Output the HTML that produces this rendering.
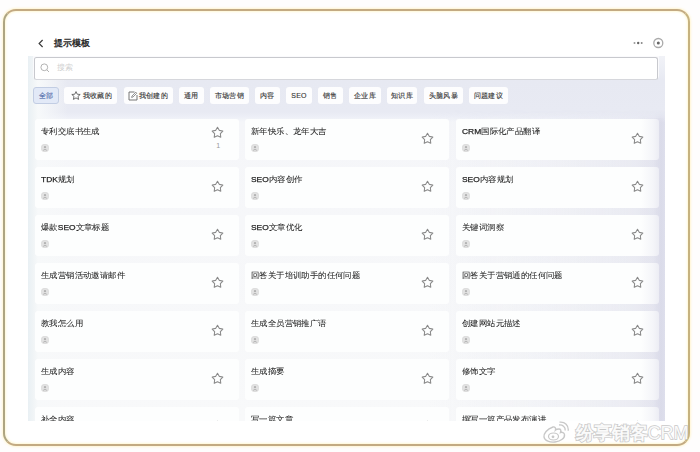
<!DOCTYPE html>
<html><head><meta charset="utf-8">
<style>
*{margin:0;padding:0;box-sizing:border-box}
html,body{width:700px;height:452px;overflow:hidden;background:#fefdfd;font-family:"Liberation Sans",sans-serif;color:#333}
.abs{position:absolute}
#frame{position:absolute;left:2.7px;top:8.7px;width:687.5px;height:437.4px;border:2px solid #c3aa82;border-left-color:#aea582;border-right-color:#c6b27f;border-radius:13px;background:#fff;box-shadow:0 0 2px 1px rgba(255,244,200,0.8),inset 0 0 2px 1px rgba(255,246,205,0.8)}
#title{left:54px;top:38px;font-size:9px;font-weight:normal;color:#222;line-height:11px;white-space:nowrap;-webkit-text-stroke:0.35px #222}
#panel{left:28px;top:56px;width:637px;height:365px;background:linear-gradient(90deg,#e9f0f4 0,#f0f4f6 5px,#f7f9fa 10px,rgba(247,249,250,0) 40px),linear-gradient(180deg,#f1f2f7 0,#eceef5 12px,#e7e9f2 24px,#e8eaf3 56px,#eceef6 60px,#f5f6f9 66px,#f8f9fa 100%);overflow:hidden}
#rstrip{position:absolute;left:0;top:54px;width:637px;height:311px;-webkit-mask-image:linear-gradient(180deg,transparent 0,#000 12px);background:linear-gradient(90deg,rgba(218,219,233,0) 0,rgba(218,219,233,0) 400px,rgba(218,219,233,0.22) 532px,rgba(218,219,233,0.4) 600px,rgba(218,219,233,0.6) 625px,rgba(218,219,233,1) 633px,rgba(222,223,236,1) 637px)}
#rov{position:absolute;left:605px;top:62px;width:32px;height:303px;background:linear-gradient(90deg,rgba(222,222,236,0) 0,rgba(222,222,236,0) 8px,rgba(225,225,238,0.3) 20px,rgba(220,220,234,0.5) 26px,rgba(220,220,234,0) 32px)}
#search{left:6px;top:1px;width:624px;height:22.5px;background:#fff;border:1px solid #c8c9ce;border-bottom-color:#d6d7dc;border-radius:2.5px;box-shadow:0 -2px 0 1px #fafafc}
#search .ph{position:absolute;left:22px;top:5px;font-size:8px;color:#d0d0d0;line-height:10px}
.chip{position:absolute;top:31.3px;height:16.5px;background:#fdfdfe;border-radius:3px;font-size:7px;letter-spacing:0.2px;line-height:17px;color:#333;white-space:nowrap;text-align:center;-webkit-text-stroke:0.12px #333}
.chip .ct{position:absolute;top:0}
.chip.on{background:#e2e9f7;border:1px solid #c2cde3;color:#4d68a8;line-height:15.5px;-webkit-text-stroke:0.12px #4d68a8}
.card{position:absolute;height:41px;background:#fdfefe;border-radius:3px}
.card .t{position:absolute;left:6px;top:6.6px;font-size:8px;line-height:11px;transform-origin:0 50%;transform:scaleX(1.05);color:#1f1f1f;white-space:nowrap;-webkit-text-stroke:0.05px #1f1f1f}
.l{letter-spacing:0;-webkit-text-stroke:0.25px #1f1f1f}
.card .av{position:absolute;left:6px;top:24.5px;width:8px;height:8px}.card .av svg{display:block}
.card svg.st{position:absolute}
.card .cnt{position:absolute;top:23px;font-size:7px;color:#999;line-height:8px}
#wm{left:575.5px;top:421px;font-size:18px;font-weight:bold;line-height:24px;color:#fafafa;white-space:nowrap;-webkit-text-stroke:1.5px #c8c8c8;paint-order:stroke fill;letter-spacing:0}
</style></head><body>
<div id="frame"></div>
<svg class="abs" style="left:37px;top:39px" width="8" height="9" viewBox="0 0 8 9"><path d="M5.6 1 L2.1 4.5 L5.6 8" fill="none" stroke="#3a3a3a" stroke-width="1.15"/></svg>
<div id="title" class="abs">提示模板</div>
<svg class="abs" style="left:632px;top:40px" width="12" height="6" viewBox="0 0 12 6"><circle cx="2.5" cy="3" r="1" fill="#999"/><circle cx="6.2" cy="3" r="1.2" fill="#666"/><circle cx="9.7" cy="3" r="1" fill="#888"/></svg>
<svg class="abs" style="left:652px;top:37px" width="12" height="12" viewBox="0 0 12 12"><circle cx="6.3" cy="6" r="4.5" fill="none" stroke="#aaa" stroke-width="1.3"/><circle cx="6.3" cy="6" r="1.5" fill="#666"/></svg>
<div id="panel" class="abs">
<div id="rstrip"></div>
<div id="search" class="abs"><svg class="abs" style="left:5px;top:5px" width="10" height="10" viewBox="0 0 10 10"><circle cx="4.3" cy="4.3" r="3.4" fill="none" stroke="#aaa" stroke-width="0.9"/><path d="M6.8 6.8 L9 9" stroke="#aaa" stroke-width="0.9"/></svg><div class="ph">搜索</div></div>
<div class="chip on" style="left:5px;width:26px">全部</div><div class="chip" style="left:36px;width:53px"><svg style="position:absolute;left:6.5px;top:3.5px" width="10" height="9" viewBox="0 0 10 9"><path d="M5 0.6 L6.2 3.2 L9.2 3.5 L7 5.4 L7.6 8.4 L5 6.9 L2.4 8.4 L3 5.4 L0.8 3.5 L3.8 3.2 Z" fill="none" stroke="#555" stroke-width="0.85" stroke-linejoin="round"/></svg><span class="ct" style="left:19px">我收藏的</span></div><div class="chip" style="left:96px;width:49px"><svg style="position:absolute;left:3.5px;top:3.8px" width="10" height="10" viewBox="0 0 10 10"><path d="M6.5 1 L1 1 L1 9 L9 9 L9 4" fill="none" stroke="#666" stroke-width="0.9"/><path d="M3.6 6.4 L4 5 L7.8 1.2 L8.8 2.2 L5 6 Z" fill="none" stroke="#666" stroke-width="0.7"/></svg><span class="ct" style="left:15px">我创建的</span></div><div class="chip" style="left:151px;width:25px">通用</div><div class="chip" style="left:182px;width:39px">市场营销</div><div class="chip" style="left:227px;width:25px">内容</div><div class="chip" style="left:258px;width:26px">SEO</div><div class="chip" style="left:290px;width:25px">销售</div><div class="chip" style="left:321px;width:32px">企业库</div><div class="chip" style="left:359px;width:30px">知识库</div><div class="chip" style="left:396px;width:39px">头脑风暴</div><div class="chip" style="left:441px;width:39px">问题建议</div>
<div class="card" style="left:7px;top:63px;width:203.5px"><div class="t">专利交底书生成</div><div class="av"><svg width="8" height="8" viewBox="0 0 8 8"><circle cx="4" cy="4" r="3.9" fill="#e2e2e2" stroke="#d2d2d2" stroke-width="0.4"/><circle cx="4" cy="3.2" r="1.15" fill="#b2b2b2"/><path d="M2.2 6.3 Q4 4.5 5.8 6.3" fill="none" stroke="#b2b2b2" stroke-width="1"/></svg></div><svg class="st" style="left:176.2px;top:7.4px" width="13" height="12" viewBox="0 0 13 12"><path d="M6.50 1.20 L8.26 4.37 L11.83 5.07 L9.35 7.73 L9.79 11.33 L6.50 9.80 L3.21 11.33 L3.65 7.73 L1.17 5.07 L4.74 4.37 Z" fill="none" stroke="#8a8a8a" stroke-width="1.05" stroke-linejoin="round"/></svg><div class="cnt" style="left:181.2px">1</div></div><div class="card" style="left:217px;top:63px;width:203.5px"><div class="t">新年快乐、龙年大吉</div><div class="av"><svg width="8" height="8" viewBox="0 0 8 8"><circle cx="4" cy="4" r="3.9" fill="#e2e2e2" stroke="#d2d2d2" stroke-width="0.4"/><circle cx="4" cy="3.2" r="1.15" fill="#b2b2b2"/><path d="M2.2 6.3 Q4 4.5 5.8 6.3" fill="none" stroke="#b2b2b2" stroke-width="1"/></svg></div><svg class="st" style="left:176.2px;top:13.4px" width="13" height="12" viewBox="0 0 13 12"><path d="M6.50 1.20 L8.26 4.37 L11.83 5.07 L9.35 7.73 L9.79 11.33 L6.50 9.80 L3.21 11.33 L3.65 7.73 L1.17 5.07 L4.74 4.37 Z" fill="none" stroke="#8a8a8a" stroke-width="1.05" stroke-linejoin="round"/></svg></div><div class="card" style="left:428px;top:63px;width:203px"><div class="t"><span class="l">CRM</span>国际化产品翻译</div><div class="av"><svg width="8" height="8" viewBox="0 0 8 8"><circle cx="4" cy="4" r="3.9" fill="#e2e2e2" stroke="#d2d2d2" stroke-width="0.4"/><circle cx="4" cy="3.2" r="1.15" fill="#b2b2b2"/><path d="M2.2 6.3 Q4 4.5 5.8 6.3" fill="none" stroke="#b2b2b2" stroke-width="1"/></svg></div><svg class="st" style="left:175.2px;top:13.4px" width="13" height="12" viewBox="0 0 13 12"><path d="M6.50 1.20 L8.26 4.37 L11.83 5.07 L9.35 7.73 L9.79 11.33 L6.50 9.80 L3.21 11.33 L3.65 7.73 L1.17 5.07 L4.74 4.37 Z" fill="none" stroke="#8a8a8a" stroke-width="1.05" stroke-linejoin="round"/></svg></div><div class="card" style="left:7px;top:111px;width:203.5px"><div class="t"><span class="l">TDK</span>规划</div><div class="av"><svg width="8" height="8" viewBox="0 0 8 8"><circle cx="4" cy="4" r="3.9" fill="#e2e2e2" stroke="#d2d2d2" stroke-width="0.4"/><circle cx="4" cy="3.2" r="1.15" fill="#b2b2b2"/><path d="M2.2 6.3 Q4 4.5 5.8 6.3" fill="none" stroke="#b2b2b2" stroke-width="1"/></svg></div><svg class="st" style="left:176.2px;top:13.4px" width="13" height="12" viewBox="0 0 13 12"><path d="M6.50 1.20 L8.26 4.37 L11.83 5.07 L9.35 7.73 L9.79 11.33 L6.50 9.80 L3.21 11.33 L3.65 7.73 L1.17 5.07 L4.74 4.37 Z" fill="none" stroke="#8a8a8a" stroke-width="1.05" stroke-linejoin="round"/></svg></div><div class="card" style="left:217px;top:111px;width:203.5px"><div class="t"><span class="l">SEO</span>内容创作</div><div class="av"><svg width="8" height="8" viewBox="0 0 8 8"><circle cx="4" cy="4" r="3.9" fill="#e2e2e2" stroke="#d2d2d2" stroke-width="0.4"/><circle cx="4" cy="3.2" r="1.15" fill="#b2b2b2"/><path d="M2.2 6.3 Q4 4.5 5.8 6.3" fill="none" stroke="#b2b2b2" stroke-width="1"/></svg></div><svg class="st" style="left:176.2px;top:13.4px" width="13" height="12" viewBox="0 0 13 12"><path d="M6.50 1.20 L8.26 4.37 L11.83 5.07 L9.35 7.73 L9.79 11.33 L6.50 9.80 L3.21 11.33 L3.65 7.73 L1.17 5.07 L4.74 4.37 Z" fill="none" stroke="#8a8a8a" stroke-width="1.05" stroke-linejoin="round"/></svg></div><div class="card" style="left:428px;top:111px;width:203px"><div class="t"><span class="l">SEO</span>内容规划</div><div class="av"><svg width="8" height="8" viewBox="0 0 8 8"><circle cx="4" cy="4" r="3.9" fill="#e2e2e2" stroke="#d2d2d2" stroke-width="0.4"/><circle cx="4" cy="3.2" r="1.15" fill="#b2b2b2"/><path d="M2.2 6.3 Q4 4.5 5.8 6.3" fill="none" stroke="#b2b2b2" stroke-width="1"/></svg></div><svg class="st" style="left:175.2px;top:13.4px" width="13" height="12" viewBox="0 0 13 12"><path d="M6.50 1.20 L8.26 4.37 L11.83 5.07 L9.35 7.73 L9.79 11.33 L6.50 9.80 L3.21 11.33 L3.65 7.73 L1.17 5.07 L4.74 4.37 Z" fill="none" stroke="#8a8a8a" stroke-width="1.05" stroke-linejoin="round"/></svg></div><div class="card" style="left:7px;top:159px;width:203.5px"><div class="t">爆款<span class="l">SEO</span>文章标题</div><div class="av"><svg width="8" height="8" viewBox="0 0 8 8"><circle cx="4" cy="4" r="3.9" fill="#e2e2e2" stroke="#d2d2d2" stroke-width="0.4"/><circle cx="4" cy="3.2" r="1.15" fill="#b2b2b2"/><path d="M2.2 6.3 Q4 4.5 5.8 6.3" fill="none" stroke="#b2b2b2" stroke-width="1"/></svg></div><svg class="st" style="left:176.2px;top:13.4px" width="13" height="12" viewBox="0 0 13 12"><path d="M6.50 1.20 L8.26 4.37 L11.83 5.07 L9.35 7.73 L9.79 11.33 L6.50 9.80 L3.21 11.33 L3.65 7.73 L1.17 5.07 L4.74 4.37 Z" fill="none" stroke="#8a8a8a" stroke-width="1.05" stroke-linejoin="round"/></svg></div><div class="card" style="left:217px;top:159px;width:203.5px"><div class="t"><span class="l">SEO</span>文章优化</div><div class="av"><svg width="8" height="8" viewBox="0 0 8 8"><circle cx="4" cy="4" r="3.9" fill="#e2e2e2" stroke="#d2d2d2" stroke-width="0.4"/><circle cx="4" cy="3.2" r="1.15" fill="#b2b2b2"/><path d="M2.2 6.3 Q4 4.5 5.8 6.3" fill="none" stroke="#b2b2b2" stroke-width="1"/></svg></div><svg class="st" style="left:176.2px;top:13.4px" width="13" height="12" viewBox="0 0 13 12"><path d="M6.50 1.20 L8.26 4.37 L11.83 5.07 L9.35 7.73 L9.79 11.33 L6.50 9.80 L3.21 11.33 L3.65 7.73 L1.17 5.07 L4.74 4.37 Z" fill="none" stroke="#8a8a8a" stroke-width="1.05" stroke-linejoin="round"/></svg></div><div class="card" style="left:428px;top:159px;width:203px"><div class="t">关键词洞察</div><div class="av"><svg width="8" height="8" viewBox="0 0 8 8"><circle cx="4" cy="4" r="3.9" fill="#e2e2e2" stroke="#d2d2d2" stroke-width="0.4"/><circle cx="4" cy="3.2" r="1.15" fill="#b2b2b2"/><path d="M2.2 6.3 Q4 4.5 5.8 6.3" fill="none" stroke="#b2b2b2" stroke-width="1"/></svg></div><svg class="st" style="left:175.2px;top:13.4px" width="13" height="12" viewBox="0 0 13 12"><path d="M6.50 1.20 L8.26 4.37 L11.83 5.07 L9.35 7.73 L9.79 11.33 L6.50 9.80 L3.21 11.33 L3.65 7.73 L1.17 5.07 L4.74 4.37 Z" fill="none" stroke="#8a8a8a" stroke-width="1.05" stroke-linejoin="round"/></svg></div><div class="card" style="left:7px;top:207px;width:203.5px"><div class="t">生成营销活动邀请邮件</div><div class="av"><svg width="8" height="8" viewBox="0 0 8 8"><circle cx="4" cy="4" r="3.9" fill="#e2e2e2" stroke="#d2d2d2" stroke-width="0.4"/><circle cx="4" cy="3.2" r="1.15" fill="#b2b2b2"/><path d="M2.2 6.3 Q4 4.5 5.8 6.3" fill="none" stroke="#b2b2b2" stroke-width="1"/></svg></div><svg class="st" style="left:176.2px;top:13.4px" width="13" height="12" viewBox="0 0 13 12"><path d="M6.50 1.20 L8.26 4.37 L11.83 5.07 L9.35 7.73 L9.79 11.33 L6.50 9.80 L3.21 11.33 L3.65 7.73 L1.17 5.07 L4.74 4.37 Z" fill="none" stroke="#8a8a8a" stroke-width="1.05" stroke-linejoin="round"/></svg></div><div class="card" style="left:217px;top:207px;width:203.5px"><div class="t">回答关于培训助手的任何问题</div><div class="av"><svg width="8" height="8" viewBox="0 0 8 8"><circle cx="4" cy="4" r="3.9" fill="#e2e2e2" stroke="#d2d2d2" stroke-width="0.4"/><circle cx="4" cy="3.2" r="1.15" fill="#b2b2b2"/><path d="M2.2 6.3 Q4 4.5 5.8 6.3" fill="none" stroke="#b2b2b2" stroke-width="1"/></svg></div><svg class="st" style="left:176.2px;top:13.4px" width="13" height="12" viewBox="0 0 13 12"><path d="M6.50 1.20 L8.26 4.37 L11.83 5.07 L9.35 7.73 L9.79 11.33 L6.50 9.80 L3.21 11.33 L3.65 7.73 L1.17 5.07 L4.74 4.37 Z" fill="none" stroke="#8a8a8a" stroke-width="1.05" stroke-linejoin="round"/></svg></div><div class="card" style="left:428px;top:207px;width:203px"><div class="t">回答关于营销通的任何问题</div><div class="av"><svg width="8" height="8" viewBox="0 0 8 8"><circle cx="4" cy="4" r="3.9" fill="#e2e2e2" stroke="#d2d2d2" stroke-width="0.4"/><circle cx="4" cy="3.2" r="1.15" fill="#b2b2b2"/><path d="M2.2 6.3 Q4 4.5 5.8 6.3" fill="none" stroke="#b2b2b2" stroke-width="1"/></svg></div><svg class="st" style="left:175.2px;top:13.4px" width="13" height="12" viewBox="0 0 13 12"><path d="M6.50 1.20 L8.26 4.37 L11.83 5.07 L9.35 7.73 L9.79 11.33 L6.50 9.80 L3.21 11.33 L3.65 7.73 L1.17 5.07 L4.74 4.37 Z" fill="none" stroke="#8a8a8a" stroke-width="1.05" stroke-linejoin="round"/></svg></div><div class="card" style="left:7px;top:255px;width:203.5px"><div class="t">教我怎么用</div><div class="av"><svg width="8" height="8" viewBox="0 0 8 8"><circle cx="4" cy="4" r="3.9" fill="#e2e2e2" stroke="#d2d2d2" stroke-width="0.4"/><circle cx="4" cy="3.2" r="1.15" fill="#b2b2b2"/><path d="M2.2 6.3 Q4 4.5 5.8 6.3" fill="none" stroke="#b2b2b2" stroke-width="1"/></svg></div><svg class="st" style="left:176.2px;top:13.4px" width="13" height="12" viewBox="0 0 13 12"><path d="M6.50 1.20 L8.26 4.37 L11.83 5.07 L9.35 7.73 L9.79 11.33 L6.50 9.80 L3.21 11.33 L3.65 7.73 L1.17 5.07 L4.74 4.37 Z" fill="none" stroke="#8a8a8a" stroke-width="1.05" stroke-linejoin="round"/></svg></div><div class="card" style="left:217px;top:255px;width:203.5px"><div class="t">生成全员营销推广语</div><div class="av"><svg width="8" height="8" viewBox="0 0 8 8"><circle cx="4" cy="4" r="3.9" fill="#e2e2e2" stroke="#d2d2d2" stroke-width="0.4"/><circle cx="4" cy="3.2" r="1.15" fill="#b2b2b2"/><path d="M2.2 6.3 Q4 4.5 5.8 6.3" fill="none" stroke="#b2b2b2" stroke-width="1"/></svg></div><svg class="st" style="left:176.2px;top:13.4px" width="13" height="12" viewBox="0 0 13 12"><path d="M6.50 1.20 L8.26 4.37 L11.83 5.07 L9.35 7.73 L9.79 11.33 L6.50 9.80 L3.21 11.33 L3.65 7.73 L1.17 5.07 L4.74 4.37 Z" fill="none" stroke="#8a8a8a" stroke-width="1.05" stroke-linejoin="round"/></svg></div><div class="card" style="left:428px;top:255px;width:203px"><div class="t">创建网站元描述</div><div class="av"><svg width="8" height="8" viewBox="0 0 8 8"><circle cx="4" cy="4" r="3.9" fill="#e2e2e2" stroke="#d2d2d2" stroke-width="0.4"/><circle cx="4" cy="3.2" r="1.15" fill="#b2b2b2"/><path d="M2.2 6.3 Q4 4.5 5.8 6.3" fill="none" stroke="#b2b2b2" stroke-width="1"/></svg></div><svg class="st" style="left:175.2px;top:13.4px" width="13" height="12" viewBox="0 0 13 12"><path d="M6.50 1.20 L8.26 4.37 L11.83 5.07 L9.35 7.73 L9.79 11.33 L6.50 9.80 L3.21 11.33 L3.65 7.73 L1.17 5.07 L4.74 4.37 Z" fill="none" stroke="#8a8a8a" stroke-width="1.05" stroke-linejoin="round"/></svg></div><div class="card" style="left:7px;top:303px;width:203.5px"><div class="t">生成内容</div><div class="av"><svg width="8" height="8" viewBox="0 0 8 8"><circle cx="4" cy="4" r="3.9" fill="#e2e2e2" stroke="#d2d2d2" stroke-width="0.4"/><circle cx="4" cy="3.2" r="1.15" fill="#b2b2b2"/><path d="M2.2 6.3 Q4 4.5 5.8 6.3" fill="none" stroke="#b2b2b2" stroke-width="1"/></svg></div><svg class="st" style="left:176.2px;top:13.4px" width="13" height="12" viewBox="0 0 13 12"><path d="M6.50 1.20 L8.26 4.37 L11.83 5.07 L9.35 7.73 L9.79 11.33 L6.50 9.80 L3.21 11.33 L3.65 7.73 L1.17 5.07 L4.74 4.37 Z" fill="none" stroke="#8a8a8a" stroke-width="1.05" stroke-linejoin="round"/></svg></div><div class="card" style="left:217px;top:303px;width:203.5px"><div class="t">生成摘要</div><div class="av"><svg width="8" height="8" viewBox="0 0 8 8"><circle cx="4" cy="4" r="3.9" fill="#e2e2e2" stroke="#d2d2d2" stroke-width="0.4"/><circle cx="4" cy="3.2" r="1.15" fill="#b2b2b2"/><path d="M2.2 6.3 Q4 4.5 5.8 6.3" fill="none" stroke="#b2b2b2" stroke-width="1"/></svg></div><svg class="st" style="left:176.2px;top:13.4px" width="13" height="12" viewBox="0 0 13 12"><path d="M6.50 1.20 L8.26 4.37 L11.83 5.07 L9.35 7.73 L9.79 11.33 L6.50 9.80 L3.21 11.33 L3.65 7.73 L1.17 5.07 L4.74 4.37 Z" fill="none" stroke="#8a8a8a" stroke-width="1.05" stroke-linejoin="round"/></svg></div><div class="card" style="left:428px;top:303px;width:203px"><div class="t">修饰文字</div><div class="av"><svg width="8" height="8" viewBox="0 0 8 8"><circle cx="4" cy="4" r="3.9" fill="#e2e2e2" stroke="#d2d2d2" stroke-width="0.4"/><circle cx="4" cy="3.2" r="1.15" fill="#b2b2b2"/><path d="M2.2 6.3 Q4 4.5 5.8 6.3" fill="none" stroke="#b2b2b2" stroke-width="1"/></svg></div><svg class="st" style="left:175.2px;top:13.4px" width="13" height="12" viewBox="0 0 13 12"><path d="M6.50 1.20 L8.26 4.37 L11.83 5.07 L9.35 7.73 L9.79 11.33 L6.50 9.80 L3.21 11.33 L3.65 7.73 L1.17 5.07 L4.74 4.37 Z" fill="none" stroke="#8a8a8a" stroke-width="1.05" stroke-linejoin="round"/></svg></div><div class="card" style="left:7px;top:351px;width:203.5px"><div class="t">补全内容</div><div class="av"><svg width="8" height="8" viewBox="0 0 8 8"><circle cx="4" cy="4" r="3.9" fill="#e2e2e2" stroke="#d2d2d2" stroke-width="0.4"/><circle cx="4" cy="3.2" r="1.15" fill="#b2b2b2"/><path d="M2.2 6.3 Q4 4.5 5.8 6.3" fill="none" stroke="#b2b2b2" stroke-width="1"/></svg></div><svg class="st" style="left:176.2px;top:13.4px" width="13" height="12" viewBox="0 0 13 12"><path d="M6.50 1.20 L8.26 4.37 L11.83 5.07 L9.35 7.73 L9.79 11.33 L6.50 9.80 L3.21 11.33 L3.65 7.73 L1.17 5.07 L4.74 4.37 Z" fill="none" stroke="#8a8a8a" stroke-width="1.05" stroke-linejoin="round"/></svg></div><div class="card" style="left:217px;top:351px;width:203.5px"><div class="t">写一篇文章</div><div class="av"><svg width="8" height="8" viewBox="0 0 8 8"><circle cx="4" cy="4" r="3.9" fill="#e2e2e2" stroke="#d2d2d2" stroke-width="0.4"/><circle cx="4" cy="3.2" r="1.15" fill="#b2b2b2"/><path d="M2.2 6.3 Q4 4.5 5.8 6.3" fill="none" stroke="#b2b2b2" stroke-width="1"/></svg></div><svg class="st" style="left:176.2px;top:13.4px" width="13" height="12" viewBox="0 0 13 12"><path d="M6.50 1.20 L8.26 4.37 L11.83 5.07 L9.35 7.73 L9.79 11.33 L6.50 9.80 L3.21 11.33 L3.65 7.73 L1.17 5.07 L4.74 4.37 Z" fill="none" stroke="#8a8a8a" stroke-width="1.05" stroke-linejoin="round"/></svg></div><div class="card" style="left:428px;top:351px;width:203px"><div class="t">撰写一篇产品发布演讲</div><div class="av"><svg width="8" height="8" viewBox="0 0 8 8"><circle cx="4" cy="4" r="3.9" fill="#e2e2e2" stroke="#d2d2d2" stroke-width="0.4"/><circle cx="4" cy="3.2" r="1.15" fill="#b2b2b2"/><path d="M2.2 6.3 Q4 4.5 5.8 6.3" fill="none" stroke="#b2b2b2" stroke-width="1"/></svg></div><svg class="st" style="left:175.2px;top:13.4px" width="13" height="12" viewBox="0 0 13 12"><path d="M6.50 1.20 L8.26 4.37 L11.83 5.07 L9.35 7.73 L9.79 11.33 L6.50 9.80 L3.21 11.33 L3.65 7.73 L1.17 5.07 L4.74 4.37 Z" fill="none" stroke="#8a8a8a" stroke-width="1.05" stroke-linejoin="round"/></svg></div>
<div id="rov"></div>
</div>
<svg class="abs" style="left:542px;top:421px" width="28" height="23" viewBox="0 0 28 23"><path d="M11 6 C5 8 1.5 12.5 2 16 C2.6 20 8 21.5 13 21 C19 20.3 23 17 22.5 13.5 C22.2 11.5 20 11 18.5 11.5 C19.3 9.5 18.8 8 17 8 C15.5 8 14 8.5 13.5 9 C14 7 13 5.5 11 6 Z" fill="#fff" stroke="#c8c8c8" stroke-width="1.4"/><ellipse cx="11.5" cy="15.5" rx="5" ry="3.5" fill="none" stroke="#c8c8c8" stroke-width="1.2"/><circle cx="11" cy="15.8" r="1.4" fill="#c8c8c8"/><path d="M17 4 C20.5 3.6 23.5 6 23.2 9.5" fill="none" stroke="#c8c8c8" stroke-width="1.3"/><path d="M17.5 1.2 C23 0.5 26.8 4.5 26.2 9.8" fill="none" stroke="#c8c8c8" stroke-width="1.3"/></svg><div id="wm" class="abs">纷享销客<span style="font-weight:normal;font-size:18px;-webkit-text-stroke:1.4px #c8c8c8">CRM</span></div>
</body></html>
